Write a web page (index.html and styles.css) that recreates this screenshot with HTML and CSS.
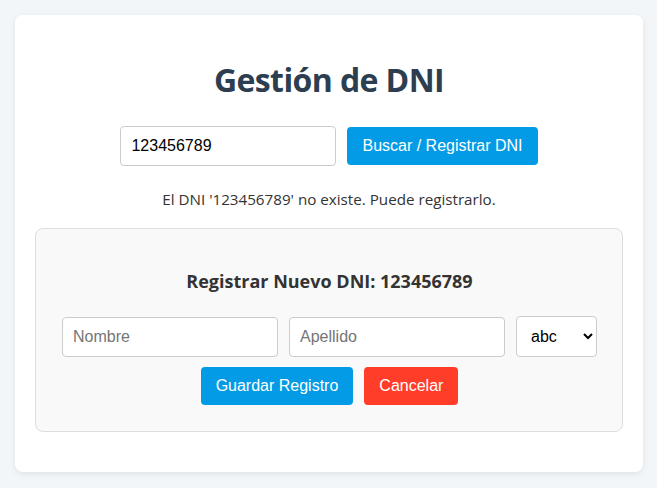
FILE: index.html
```html
<!DOCTYPE html>
<html lang="es">
<head>
<meta charset="utf-8">
<title>Gestión de DNI</title>
<link rel="stylesheet" href="styles.css">
</head>
<body>
<div class="card">
  <h1 class="title">Gestión de DNI</h1>
  <div class="search-row">
    <input class="field" type="text" value="123456789">
    <button class="btn btn-primary">Buscar / Registrar DNI</button>
  </div>
  <p class="message">El DNI '123456789' no existe. Puede registrarlo.</p>
  <div class="register-box">
    <h3 class="register-title">Registrar Nuevo DNI: 123456789</h3>
    <div class="form-row">
      <input class="field" type="text" placeholder="Nombre">
      <input class="field" type="text" placeholder="Apellido">
      <select class="select"><option>abc</option></select>
    </div>
    <div class="actions">
      <button class="btn btn-primary">Guardar Registro</button>
      <button class="btn btn-danger">Cancelar</button>
    </div>
  </div>
</div>
</body>
</html>
```
FILE: styles.css
```css
html, body {
  margin: 0;
  padding: 0;
}
body {
  background: #f3f6f9;
  padding: 15px 14px 15px 15px;
  font-family: "Open Sans", "Noto Sans", sans-serif;
  color: #333;
}
.card {
  background: #fff;
  border-radius: 8px;
  box-shadow: 0 2px 6px rgba(0, 0, 0, 0.08);
  padding: 20px 20px;
  text-align: center;
}
.title {
  margin: 25px 0 26px;
  font-size: 32px;
  line-height: 40px;
  font-weight: 700;
  letter-spacing: -0.6px;
  color: #2c3e50;
}
.search-row, .form-row, .actions {
  display: flex;
  justify-content: center;
  align-items: center;
  gap: 11px;
}
.field {
  box-sizing: border-box;
  width: 216px;
  height: 40px;
  padding: 10px;
  border: 1px solid #ccc;
  border-radius: 4px;
  font-family: "Liberation Sans", Arial, sans-serif;
  font-size: 16px;
  color: #000;
  background: #fff;
  flex-shrink: 0;
}
.field::placeholder {
  color: #757575;
}
.select {
  box-sizing: border-box;
  height: 41px;
  padding: 0 8px 0 10px;
  width: 81px;
  border: 1px solid #ccc;
  border-radius: 4px;
  font-family: "Liberation Sans", Arial, sans-serif;
  font-size: 16px;
  color: #000;
  background: #fff;
  flex-shrink: 0;
}
.btn {
  border: none;
  border-radius: 4px;
  padding: 10px 15px;
  font-family: "Liberation Sans", Arial, sans-serif;
  font-size: 16px;
  line-height: 18px;
  color: #fff;
  cursor: pointer;
}
.btn-primary {
  background: #039be5;
}
.btn-danger {
  background: #ff3d29;
}
.message {
  margin: 23px 0 19px;
  font-size: 15.2px;
  line-height: 20px;
  color: #333;
}
.register-box {
  background: #f9f9f9;
  border: 1px solid #ddd;
  border-radius: 8px;
  padding: 40px 25px 26px 26px;
  margin-bottom: 20px;
}
.register-title {
  margin: 0 0 23px;
  font-size: 18px;
  line-height: 24px;
  font-weight: 700;
  color: #333;
}
.actions {
  margin-top: 10px;
}
```
